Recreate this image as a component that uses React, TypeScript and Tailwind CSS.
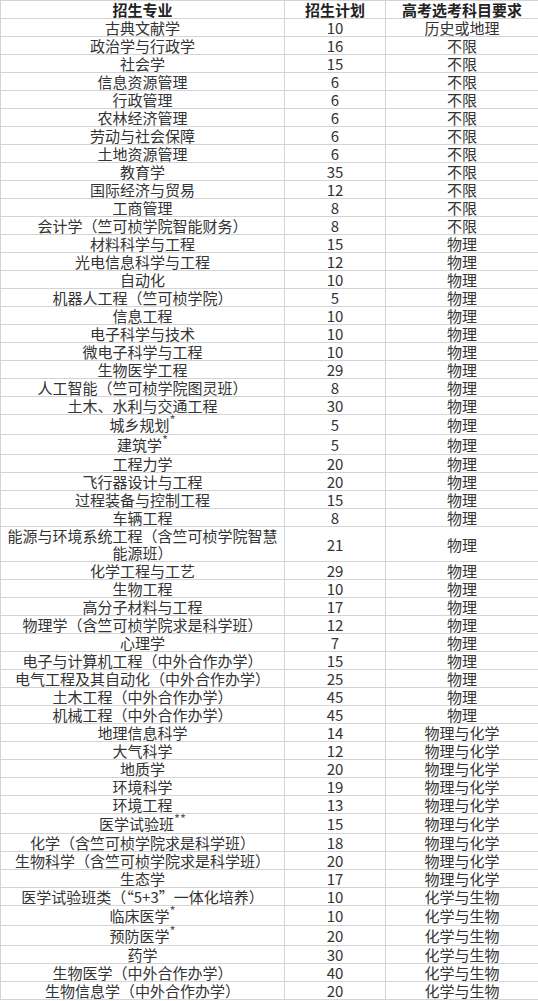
type Row = {
  name: string;
  sup?: string;
  plan: number;
  req: string;
};

const rows: Row[] = [
  { name: "古典文献学", plan: 10, req: "历史或地理" },
  { name: "政治学与行政学", plan: 16, req: "不限" },
  { name: "社会学", plan: 15, req: "不限" },
  { name: "信息资源管理", plan: 6, req: "不限" },
  { name: "行政管理", plan: 6, req: "不限" },
  { name: "农林经济管理", plan: 6, req: "不限" },
  { name: "劳动与社会保障", plan: 6, req: "不限" },
  { name: "土地资源管理", plan: 6, req: "不限" },
  { name: "教育学", plan: 35, req: "不限" },
  { name: "国际经济与贸易", plan: 12, req: "不限" },
  { name: "工商管理", plan: 8, req: "不限" },
  { name: "会计学（竺可桢学院智能财务）", plan: 8, req: "不限" },
  { name: "材料科学与工程", plan: 15, req: "物理" },
  { name: "光电信息科学与工程", plan: 12, req: "物理" },
  { name: "自动化", plan: 10, req: "物理" },
  { name: "机器人工程（竺可桢学院）", plan: 5, req: "物理" },
  { name: "信息工程", plan: 10, req: "物理" },
  { name: "电子科学与技术", plan: 10, req: "物理" },
  { name: "微电子科学与工程", plan: 10, req: "物理" },
  { name: "生物医学工程", plan: 29, req: "物理" },
  { name: "人工智能（竺可桢学院图灵班）", plan: 8, req: "物理" },
  { name: "土木、水利与交通工程", plan: 30, req: "物理" },
  { name: "城乡规划", sup: "*", plan: 5, req: "物理" },
  { name: "建筑学", sup: "*", plan: 5, req: "物理" },
  { name: "工程力学", plan: 20, req: "物理" },
  { name: "飞行器设计与工程", plan: 20, req: "物理" },
  { name: "过程装备与控制工程", plan: 15, req: "物理" },
  { name: "车辆工程", plan: 8, req: "物理" },
  { name: "能源与环境系统工程（含竺可桢学院智慧\n能源班）", plan: 21, req: "物理" },
  { name: "化学工程与工艺", plan: 29, req: "物理" },
  { name: "生物工程", plan: 10, req: "物理" },
  { name: "高分子材料与工程", plan: 17, req: "物理" },
  { name: "物理学（含竺可桢学院求是科学班）", plan: 12, req: "物理" },
  { name: "心理学", plan: 7, req: "物理" },
  { name: "电子与计算机工程（中外合作办学）", plan: 15, req: "物理" },
  { name: "电气工程及其自动化（中外合作办学）", plan: 25, req: "物理" },
  { name: "土木工程（中外合作办学）", plan: 45, req: "物理" },
  { name: "机械工程（中外合作办学）", plan: 45, req: "物理" },
  { name: "地理信息科学", plan: 14, req: "物理与化学" },
  { name: "大气科学", plan: 12, req: "物理与化学" },
  { name: "地质学", plan: 20, req: "物理与化学" },
  { name: "环境科学", plan: 19, req: "物理与化学" },
  { name: "环境工程", plan: 13, req: "物理与化学" },
  { name: "医学试验班", sup: "**", plan: 15, req: "物理与化学" },
  { name: "化学（含竺可桢学院求是科学班）", plan: 18, req: "物理与化学" },
  { name: "生物科学（含竺可桢学院求是科学班）", plan: 20, req: "物理与化学" },
  { name: "生态学", plan: 17, req: "物理与化学" },
  { name: "医学试验班类（“5+3”一体化培养）", plan: 10, req: "化学与生物" },
  { name: "临床医学", sup: "*", plan: 10, req: "化学与生物" },
  { name: "预防医学", sup: "*", plan: 20, req: "化学与生物" },
  { name: "药学", plan: 30, req: "化学与生物" },
  { name: "生物医学（中外合作办学）", plan: 40, req: "化学与生物" },
  { name: "生物信息学（中外合作办学）", plan: 20, req: "化学与生物" },
];

export default function App() {
  return (
    <div
      lang="zh-CN"
      className="w-[538px] bg-white text-[15px] leading-[17px] text-[#333] font-['Noto_Sans_CJK_SC',sans-serif]"
    >
      <table className="w-[538px] table-fixed border-collapse">
        <colgroup>
          <col className="w-[284px]" />
          <col className="w-[101px]" />
          <col className="w-[153px]" />
        </colgroup>
        <thead>
          <tr className="h-[17px]">
            <th className="border border-[#d4d4d4] p-0 text-center font-bold text-[#222]">
              招生专业
            </th>
            <th className="border border-[#d4d4d4] p-0 text-center font-bold text-[#222]">
              招生计划
            </th>
            <th className="border border-[#d4d4d4] p-0 text-center font-bold text-[#222]">
              高考选考科目要求
            </th>
          </tr>
        </thead>
        <tbody>
          {rows.map((r) => {
            const lines = r.name.split("\n");
            const rowH =
              lines.length > 1 ? "h-[35px]" : r.sup ? "h-[20px]" : "h-[17px]";
            return (
              <tr key={r.name} className={rowH}>
                <td className="border border-[#d4d4d4] p-0 text-center">
                  {lines.map((l, i) => (
                    <div key={i}>
                      {l}
                      {r.sup && (
                        <sup className="text-[13px] text-[#555]">{r.sup}</sup>
                      )}
                    </div>
                  ))}
                </td>
                <td className="border border-[#d4d4d4] p-0 text-center">
                  {r.plan}
                </td>
                <td className="border border-[#d4d4d4] p-0 text-center">
                  {r.req}
                </td>
              </tr>
            );
          })}
        </tbody>
      </table>
    </div>
  );
}
